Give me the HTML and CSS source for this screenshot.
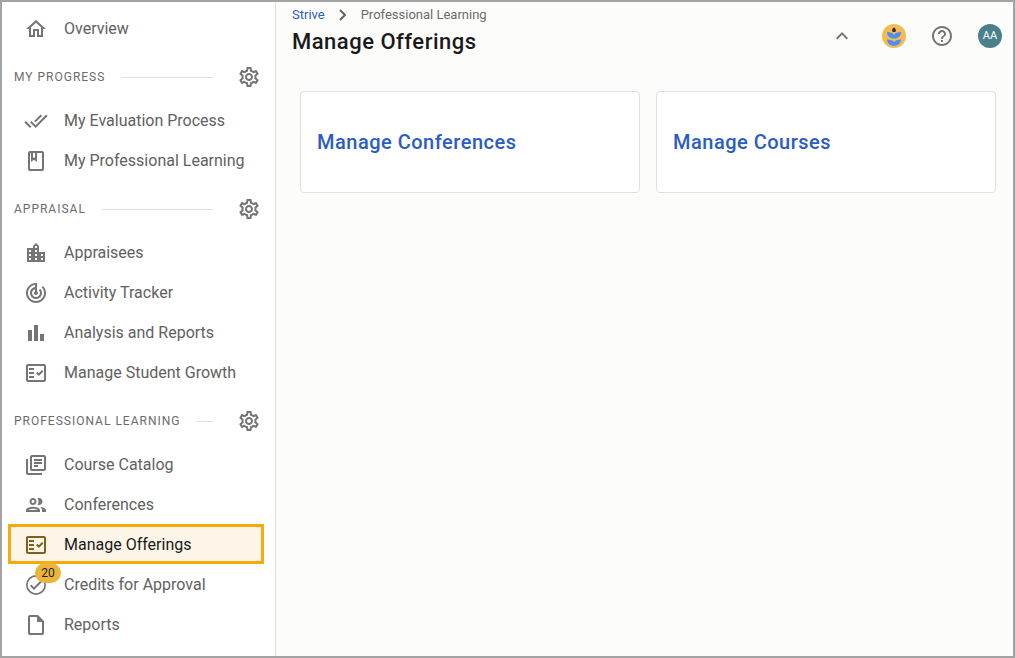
FILE: index.html
```html
<!DOCTYPE html>
<html lang="en">
<head>
<meta charset="utf-8">
<meta name="viewport" content="width=device-width, initial-scale=1">
<title>Manage Offerings</title>
<link rel="stylesheet" href="styles.css">
</head>
<body>
<svg class="symbols" aria-hidden="true">
  <symbol id="gear" viewBox="0 0 24 24"><path d="M19.43 12.98c.04-.32.07-.64.07-.98 0-.34-.03-.66-.07-.98l2.11-1.65c.19-.15.24-.42.12-.64l-2-3.46c-.09-.16-.26-.25-.44-.25-.06 0-.12.01-.17.03l-2.49 1c-.52-.4-1.08-.73-1.69-.98l-.38-2.65C14.46 2.18 14.25 2 14 2h-4c-.25 0-.46.18-.49.42l-.38 2.65c-.61.25-1.17.59-1.69.98l-2.49-1c-.06-.02-.12-.03-.18-.03-.17 0-.34.09-.43.25l-2 3.46c-.13.22-.07.49.12.64l2.11 1.65c-.04.32-.07.65-.07.98 0 .33.03.66.07.98l-2.11 1.65c-.19.15-.24.42-.12.64l2 3.46c.09.16.26.25.44.25.06 0 .12-.01.17-.03l2.49-1c.52.4 1.08.73 1.69.98l.38 2.65c.03.24.24.42.49.42h4c.25 0 .46-.18.49-.42l.38-2.65c.61-.25 1.17-.59 1.69-.98l2.49 1c.06.02.12.03.18.03.17 0 .34-.09.43-.25l2-3.46c.12-.22.07-.49-.12-.64l-2.11-1.65zm-1.98-1.71c.04.31.05.52.05.73 0 .21-.02.43-.05.73l-.14 1.13.89.7 1.08.84-.7 1.21-1.27-.51-1.04-.42-.9.68c-.43.32-.84.56-1.25.73l-1.06.43-.16 1.13-.2 1.35h-1.4l-.19-1.35-.16-1.13-1.06-.43c-.43-.18-.83-.41-1.23-.71l-.91-.7-1.06.43-1.27.51-.7-1.21 1.08-.84.89-.7-.14-1.13c-.03-.31-.05-.54-.05-.74s.02-.43.05-.73l.14-1.13-.89-.7-1.08-.84.7-1.21 1.27.51 1.04.42.9-.68c.43-.32.84-.56 1.25-.73l1.06-.43.16-1.13.2-1.35h1.39l.19 1.35.16 1.13 1.06.43c.43.18.83.41 1.23.71l.91.7 1.06-.43 1.27-.51.7 1.21-1.07.85-.89.7.14 1.13zM12 8c-2.210 0-4 1.790-4 4s1.790 4 4 4 4-1.790 4-4-1.790-4-4-4zm0 6c-1.100 0-2-.900-2-2s.900-2 2-2 2 .900 2 2-.900 2-2 2z"/></symbol>
  <symbol id="checklist" viewBox="0 0 24 24"><path fill-rule="evenodd" d="M20 3H4c-1.100 0-2 .900-2 2v14c0 1.100.900 2 2 2h16c1.100 0 2-.900 2-2V5c0-1.100-.900-2-2-2zm0 16H4V5h16v14z"/><path d="M19.410 10.420 17.990 9l-3.170 3.170-1.410-1.420L12 12.160 14.820 15zM5 7h5v2H5zM5 11h5v2H5zM5 15h5v2H5z"/></symbol>
</svg>
<div class="app">
  <nav class="sidebar" aria-label="Main">
    <a class="item" href="#"><svg class="icon" viewBox="0 0 24 24"><path d="M12 5.690l5 4.500V18h-2v-6H9v6H7v-7.810l5-4.500M12 3 2 12h3v8h6v-6h2v6h6v-8h3L12 3z"/></svg><span>Overview</span></a>

    <div class="section"><h2 class="section-title">MY PROGRESS</h2><span class="rule"></span><button class="gear" type="button" aria-label="My progress settings"><svg class="icon" viewBox="0 0 24 24"><use href="#gear"/></svg></button></div>
    <a class="item" href="#"><svg class="icon" viewBox="0 0 24 24"><path d="M18 7l-1.410-1.410-6.340 6.340 1.410 1.410L18 7zm4.240-1.410L11.660 16.170 7.480 12l-1.410 1.410L11.660 19l12-12-1.420-1.410zM.410 13.410 6 19l1.410-1.410L1.830 12 .410 13.410z"/></svg><span>My Evaluation Process</span></a>
    <a class="item" href="#"><svg class="icon" viewBox="0 0 24 24"><path d="M18 2H6c-1.100 0-2 .900-2 2v16c0 1.100.900 2 2 2h12c1.100 0 2-.900 2-2V4c0-1.100-.900-2-2-2zm0 18H6V4h1v9l3-2.250L13 13V4h5v16zM9 4h2v5l-1-.750L9 9V4z"/></svg><span>My Professional Learning</span></a>

    <div class="section"><h2 class="section-title">APPRAISAL</h2><span class="rule"></span><button class="gear" type="button" aria-label="Appraisal settings"><svg class="icon" viewBox="0 0 24 24"><use href="#gear"/></svg></button></div>
    <a class="item" href="#"><svg class="icon" viewBox="0 0 24 24"><path d="M15 11V5l-3-3-3 3v2H3v14h18V11h-6zm-8 8H5v-2h2v2zm0-4H5v-2h2v2zm0-4H5V9h2v2zm6 8h-2v-2h2v2zm0-4h-2v-2h2v2zm0-4h-2V9h2v2zm0-4h-2V5h2v2zm6 12h-2v-2h2v2zm0-4h-2v-2h2v2z"/></svg><span>Appraisees</span></a>
    <a class="item" href="#"><svg class="icon" viewBox="0 0 24 24"><path d="M19.070 4.930l-1.410 1.410C19.100 7.790 20 9.790 20 12c0 4.420-3.580 8-8 8s-8-3.580-8-8c0-4.080 3.050-7.440 7-7.930v2.020C8.160 6.570 6 9.030 6 12c0 3.310 2.690 6 6 6s6-2.690 6-6c0-1.660-.670-3.160-1.760-4.240l-1.410 1.410C15.550 9.900 16 10.900 16 12c0 2.210-1.790 4-4 4s-4-1.790-4-4c0-1.860 1.280-3.410 3-3.860v2.140c-.600.350-1 .980-1 1.720 0 1.100.900 2 2 2s2-.900 2-2c0-.740-.400-1.380-1-1.720V2h-1C6.480 2 2 6.480 2 12s4.480 10 10 10 10-4.480 10-10c0-2.760-1.120-5.260-2.930-7.070z"/></svg><span>Activity Tracker</span></a>
    <a class="item" href="#"><svg class="icon" viewBox="0 0 24 24"><path d="M4 9h4v11H4zM16 13h4v7h-4zM10 4h4v16h-4z"/></svg><span>Analysis and Reports</span></a>
    <a class="item" href="#"><svg class="icon" viewBox="0 0 24 24"><use href="#checklist"/></svg><span>Manage Student Growth</span></a>

    <div class="section"><h2 class="section-title">PROFESSIONAL LEARNING</h2><span class="rule"></span><button class="gear" type="button" aria-label="Professional learning settings"><svg class="icon" viewBox="0 0 24 24"><use href="#gear"/></svg></button></div>
    <a class="item" href="#"><svg class="icon" viewBox="0 0 24 24"><path d="M4 6H2v14c0 1.100.900 2 2 2h14v-2H4V6zm16-4H8c-1.100 0-2 .900-2 2v12c0 1.100.900 2 2 2h12c1.100 0 2-.900 2-2V4c0-1.100-.900-2-2-2zm0 14H8V4h12v12zM10 9h8v2h-8zm0 3h4v2h-4zm0-6h8v2h-8z"/></svg><span>Course Catalog</span></a>
    <a class="item" href="#"><svg class="icon" viewBox="0 0 24 24"><path d="M9 13.750c-2.340 0-7 1.170-7 3.500V19h14v-1.750c0-2.330-4.660-3.500-7-3.500zM4.340 17c.840-.580 2.870-1.250 4.660-1.250s3.820.670 4.660 1.250H4.340zM9 12c1.930 0 3.500-1.570 3.500-3.500S10.930 5 9 5 5.500 6.570 5.500 8.500 7.070 12 9 12zm0-5c.830 0 1.500.670 1.500 1.500S9.830 10 9 10s-1.500-.670-1.500-1.500S8.170 7 9 7zm7.040 6.810c1.160.840 1.960 1.960 1.960 3.440V19h4v-1.750c0-2.020-3.500-3.170-5.960-3.440zM15 12c1.930 0 3.500-1.570 3.500-3.500S16.930 5 15 5c-.540 0-1.040.130-1.500.350.630.890 1 1.980 1 3.150s-.370 2.260-1 3.150c.460.220.960.350 1.500.350z"/></svg><span>Conferences</span></a>
    <a class="item current" href="#" aria-current="page"><svg class="icon" viewBox="0 0 24 24"><use href="#checklist"/></svg><span>Manage Offerings</span></a>
    <a class="item" href="#"><span class="badged"><svg class="icon" viewBox="0 0 24 24"><path d="M12 2a10 10 0 1 0 0 20 10 10 0 0 0 0-20zm0 18.300a8.300 8.300 0 1 1 0-16.600 8.300 8.300 0 0 1 0 16.600z"/><path d="m16.600 7.600-6.600 6.600-2.600-2.600L6 13l4 4 8-8z"/></svg><span class="badge">20</span></span><span>Credits for Approval</span></a>
    <a class="item" href="#"><svg class="icon" viewBox="0 0 24 24"><path d="M14 2H6c-1.100 0-2 .900-2 2v16c0 1.100.900 2 2 2h12c1.100 0 2-.900 2-2V8l-6-6zM6 20V4h7v5h5v11H6z"/></svg><span>Reports</span></a>
  </nav>

  <div class="content">
    <header class="topbar">
      <div class="heading">
        <nav class="crumbs" aria-label="Breadcrumb"><a class="crumb-link" href="#">Strive</a><svg class="crumb-arrow" viewBox="0 0 20 20"><path d="m7 5 5 5-5 5" fill="none" stroke="currentColor" stroke-width="2"/></svg><span>Professional Learning</span></nav>
        <h1 class="title">Manage Offerings</h1>
      </div>
      <div class="actions">
        <button class="action collapse" type="button" aria-label="Collapse header"><svg class="icon" viewBox="0 0 24 24"><path d="m12 8-6 6 1.410 1.410L12 10.830l4.590 4.580L18 14z"/></svg></button>
        <button class="action" type="button" aria-label="Learning community"><svg class="icon" viewBox="0 0 24 24"><circle cx="12" cy="12" r="12" fill="#f3bb50"/><path d="M12 3.500c2.100 1.200 2.300 3.200 1.200 4.500h-2.400C9.700 6.700 9.900 4.700 12 3.500z" fill="#29264d"/><path d="M5 8c3.500 0 6 .800 7 3 1-2.200 3.500-3 7-3 0 4-2.600 6.500-7 6.500S5 12 5 8z" fill="#4d8df6"/><path d="M5 15.500c3.500 0 6 .800 7 2.700 1-1.900 3.500-2.700 7-2.700 0 3.700-2.800 6.300-7 6.300s-7-2.600-7-6.300z" fill="#4d8df6"/></svg></button>
        <button class="action" type="button" aria-label="Help"><svg class="icon" viewBox="0 0 24 24"><path d="M11 18h2v-2h-2v2zm1-16C6.480 2 2 6.480 2 12s4.480 10 10 10 10-4.480 10-10S17.520 2 12 2zm0 18c-4.410 0-8-3.590-8-8s3.590-8 8-8 8 3.590 8 8-3.590 8-8 8zm0-14c-2.210 0-4 1.790-4 4h2c0-1.100.900-2 2-2s2 .900 2 2c0 2-3 1.750-3 5h2c0-2.250 3-2.500 3-5 0-2.210-1.790-4-4-4z"/></svg></button>
        <button class="action avatar" type="button" aria-label="Account AA">AA</button>
      </div>
    </header>
    <main class="cards">
      <a class="card" href="#">Manage Conferences</a>
      <a class="card" href="#">Manage Courses</a>
    </main>
  </div>
</div>
</body>
</html>
```
FILE: styles.css
```css
* { box-sizing: border-box; }
body { margin: 0; font-family: Roboto, sans-serif; color: #616161; background: #fcfcfa; }
a { color: inherit; text-decoration: none; }
button { padding: 0; border: 0; background: none; color: inherit; font: inherit; cursor: pointer; }
.symbols { display: none; }
.icon { display: block; flex: none; width: 24px; height: 24px; fill: currentColor; }

.app { display: flex; min-height: 100vh; border: 2px solid #a3a3a3; }

.sidebar { flex: none; width: 274px; padding: 6px 11px 8px 6px; background: #fff; border-right: 1px solid #e0e0e0; }
.item { display: flex; align-items: center; gap: 16px; height: 40px; padding: 2px 13px 0; border: 3px solid transparent; font-size: 16px; line-height: 24px; color: #616161; white-space: nowrap; }
.item .icon { color: #757575; }
.item.current { background: #fdf5e8; border-color: #faa90a; color: #1a1a1a; }
.item.current .icon { color: #80601c; }
.badged { position: relative; }
.badge { position: absolute; top: -10px; left: 11px; width: 26px; height: 20px; border-radius: 10px; background: #ebb53c; color: #1f1a10; font-size: 12px; line-height: 20px; text-align: center; }

.section { display: flex; align-items: center; height: 52px; padding: 6px 3px 0 6px; }
.section-title { margin: 0; font-size: 12px; line-height: 16px; font-weight: 400; letter-spacing: 1px; color: #6b6b6b; white-space: nowrap; }
.rule { flex: 1; height: 1px; margin: 0 24px 0 16px; background: #e0e0e0; }
.gear { color: #757575; }

.content { flex: 1; min-width: 0; }
.topbar { display: flex; justify-content: space-between; align-items: flex-start; padding: 3px 11px 0 16px; }
.crumbs { display: flex; align-items: center; gap: 8px; font-size: 13px; line-height: 18px; color: #6b6b6b; }
.crumb-link { color: #2b5cc4; }
.crumb-arrow { width: 20px; height: 20px; color: #616161; }
.title { margin: 3px 0 0; font-size: 22px; line-height: 28px; font-weight: 500; color: #1a1a1a; letter-spacing: 0.5px; }
.actions { display: flex; gap: 24px; padding-top: 19px; }
.action { width: 24px; height: 24px; color: #757575; }
.collapse { margin-right: 4px; }
.avatar { border-radius: 50%; background: #4a7f8c; color: #fff; font-size: 11px; line-height: 24px; }

.cards { display: grid; grid-template-columns: repeat(2, 1fr); gap: 16px; padding: 35px 17px 16px 24px; }
.card { display: flex; align-items: center; height: 102px; padding: 0 16px; background: #fff; border: 1px solid #e0e0e0; border-radius: 4px; color: #2b5cc4; font-size: 20px; line-height: 28px; font-weight: 500; letter-spacing: 0.5px; }
```
